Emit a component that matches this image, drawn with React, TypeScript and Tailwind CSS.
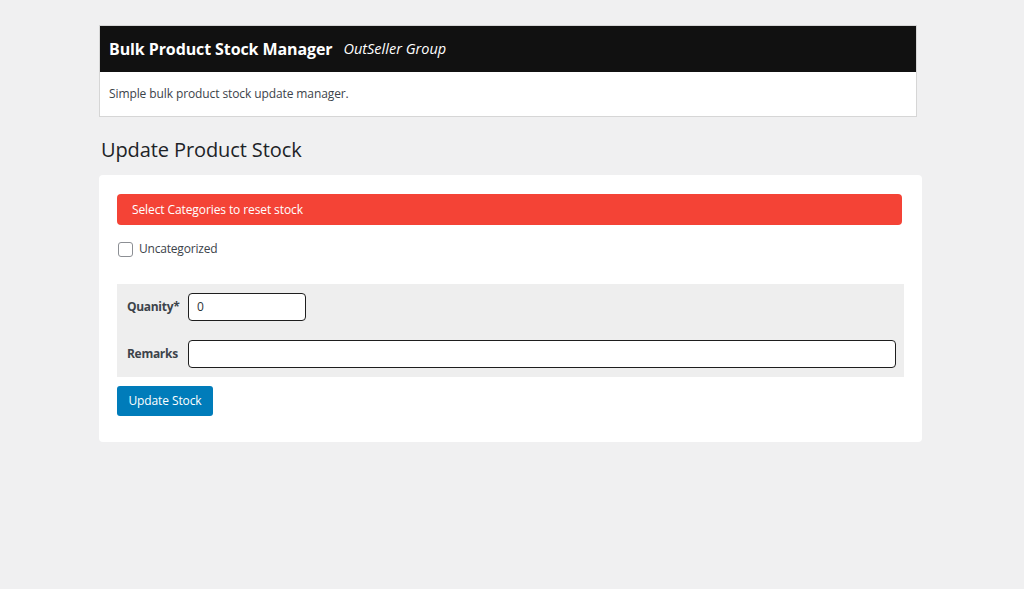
import React from "react";

export default function App() {
  return (
    <div className="min-h-[589px] w-full bg-[#f0f0f1] pt-[25px] text-[#3c434a]" style={{ fontFamily: '"Open Sans", "Noto Sans", sans-serif' }}>
      <div className="ml-[99px] w-[818px] border border-[#d6d6d6] bg-white">
        <div className="flex h-[46px] items-center gap-[11px] bg-[#111111] px-[9px]">
          <span className="text-[16px] font-bold tracking-[-0.1px] text-white">Bulk Product Stock Manager</span>
          <span className="text-[14.5px] italic text-white">OutSeller Group</span>
        </div>
        <div className="flex h-[44px] items-center px-[9px] text-[12px] tracking-[-0.1px] text-[#3c434a]">
          Simple bulk product stock update manager.
        </div>
      </div>
      <h1 className="ml-[101px] mt-[19px] text-[20px] leading-[28px] tracking-[-0.1px] text-[#1d2327]">Update Product Stock</h1>
      <div className="ml-[99px] mt-[11px] w-[823px] rounded-[4px] bg-white px-[18px] pb-[26px] pt-[19px]">
        <div className="mr-[2px] flex h-[31px] items-center rounded-[4px] bg-[#f44336] px-[15px] text-[12px] tracking-[-0.1px] text-white">
          Select Categories to reset stock
        </div>
        <label className="mt-[15px] flex items-center gap-[6px] text-[12px] tracking-[-0.2px] text-[#3c434a]">
          <span className="ml-[1px] block h-[15px] w-[15px] rounded-[3px] border border-[#8c8f94] bg-white"></span>
          Uncategorized
        </label>
        <div className="mt-[26px] bg-[#eeeeee] py-[9px] pl-[10px] pr-[8px]">
          <div className="flex h-[28px] items-center">
            <span className="w-[61px] text-[12px] font-bold tracking-[-0.3px] text-[#3c434a]">Quanity*</span>
            <div className="flex h-[28px] w-[118px] items-center rounded-[4px] border border-[#1e1e1e] bg-white px-[8px] text-[12px] text-[#2c3338]">0</div>
          </div>
          <div className="mt-[19px] flex h-[28px] items-center">
            <span className="w-[61px] text-[12px] font-bold tracking-[-0.3px] text-[#3c434a]">Remarks</span>
            <div className="h-[28px] flex-1 rounded-[4px] border border-[#1e1e1e] bg-white"></div>
          </div>
        </div>
        <button className="mt-[9px] flex h-[30px] w-[96px] items-center justify-center rounded-[3px] bg-[#007cba] text-[12px] tracking-[-0.1px] text-white">
          Update Stock
        </button>
      </div>
    </div>
  );
}
